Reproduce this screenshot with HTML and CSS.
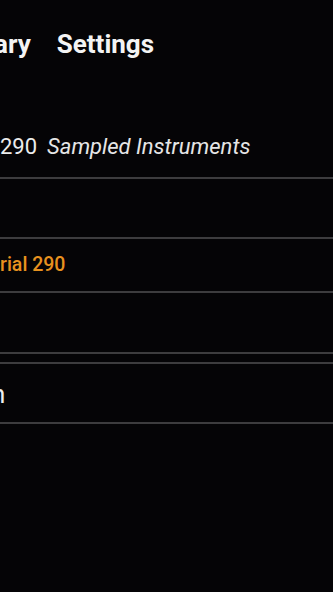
FILE: index.html
```html
<!DOCTYPE html>
<html>
<head>
<meta charset="utf-8">
<link rel="stylesheet" href="styles.css">
</head>
<body>
<div class="screen">
  <nav class="tabs">
    <span class="tab tab-cut">ary</span>
    <span class="tab">Settings</span>
  </nav>
  <ul class="list">
    <li class="row row-tall"><span class="num">290</span><span class="desc">Sampled Instruments</span></li>
    <li class="row row-tall"></li>
    <li class="row row-short"><span class="accent">rial 290</span></li>
    <li class="row row-mid"></li>
  </ul>
  <ul class="list list-second">
    <li class="row row-tall"><span class="plain">n</span></li>
  </ul>
</div>
</body>
</html>
```
FILE: styles.css
```css
html, body {
  margin: 0;
  padding: 0;
  background: #050406;
}
body {
  font-family: Roboto, "Noto Sans", "Liberation Sans", sans-serif;
  color: #f1f1f1;
  width: 333px;
  height: 592px;
  overflow: hidden;
}
.screen {
  display: flex;
  flex-direction: column;
  overflow: hidden;
}
.tabs {
  display: flex;
  gap: 26px;
  height: 90px;
  padding-top: 29px;
  box-sizing: border-box;
  font-size: 26px;
  font-weight: 700;
  line-height: 30px;
  color: #f4f4f4;
}
.tab-cut {
  margin-left: -6px;
}
.list {
  list-style: none;
  margin: 0;
  padding: 0;
}
.row {
  display: flex;
  align-items: center;
  box-sizing: border-box;
  border-bottom: 2px solid #3d3c3e;
}
.row-tall {
  height: 60px;
}
.row-short {
  height: 54px;
}
.row-mid {
  height: 61px;
}
.list > .row:first-child {
  height: 89px;
  padding-top: 27px;
}
.list-second {
  margin-top: 8px;
  border-top: 2px solid #3d3c3e;
}
.list-second > .row:first-child {
  height: 60px;
  padding-top: 2px;
}
.num {
  font-size: 22px;
  line-height: 26px;
  color: #ececec;
}
.desc {
  margin-left: 10px;
  font-size: 22px;
  line-height: 26px;
  font-style: italic;
  color: #e6e6e6;
}
.accent {
  font-size: 19.5px;
  font-weight: 500;
  line-height: 26px;
  color: #e8921f;
}
.plain {
  margin-left: -9px;
  font-size: 26px;
  line-height: 30px;
  color: #eeeeee;
}
```
